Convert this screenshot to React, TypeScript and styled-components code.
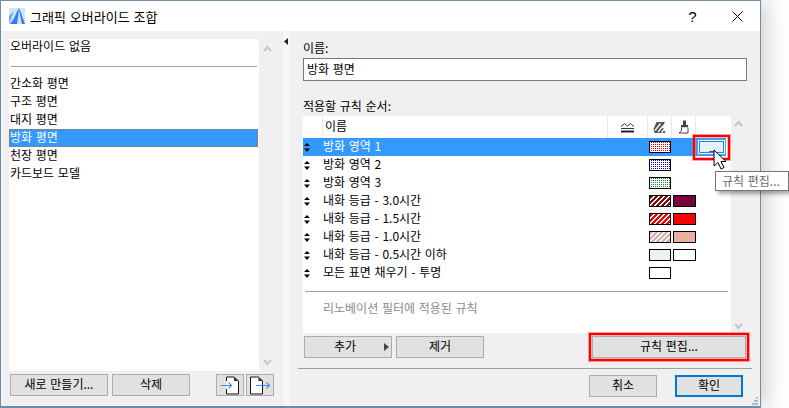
import React from 'react';
import styled, { createGlobalStyle } from 'styled-components';

const GlobalStyle = createGlobalStyle`
  html, body {
    margin: 0;
    padding: 0;
    background: #fff;
    overflow: hidden;
  }
  * {
    box-sizing: border-box;
  }
`;

const Screen = styled.div`
  position: relative;
  width: 789px;
  height: 408px;
  overflow: hidden;
  font-family: 'Noto Sans CJK KR', 'Noto Sans', sans-serif;
  font-size: 12px;
  word-spacing: 1px;
  color: #000;
`;

const Dialog = styled.div`
  position: relative;
  width: 761px;
  height: 408px;
  display: flex;
  flex-direction: column;
  background: #f0f0f0;
  border: 1px solid #6c8cab;
  border-bottom-width: 2px;
  box-shadow: 4px 0 22px rgba(0, 0, 0, 0.22);
`;

const TitleBar = styled.div`
  height: 30px;
  flex: none;
  display: flex;
  align-items: center;
  background: #fff;
  padding-left: 8px;
`;

const Title = styled.span`
  margin-left: 5px;
  font-size: 13px;
  flex: 1;
`;

const HelpMark = styled.span`
  width: 46px;
  padding-left: 3px;
  text-align: center;
  font-family: 'Liberation Sans', sans-serif;
  font-size: 15px;
`;

const CloseMark = styled.span`
  width: 46px;
  display: flex;
  justify-content: center;
`;

const Body = styled.div`
  flex: 1;
  min-height: 0;
  display: flex;
`;

const LeftPane = styled.div`
  width: 282px;
  flex: none;
  padding: 8px 0 0 8px;
`;

const ListArea = styled.div`
  display: flex;
  height: 332px;
`;

const List = styled.div`
  width: 250px;
  background: #fff;
`;

const NoOverride = styled.div`
  height: 16px;
  line-height: 14px;
  padding-left: 1px;
`;

const ListRule = styled.div`
  height: 1px;
  margin: 11px 2px 8px;
  background: #a0a0a0;
`;

const ListRow = styled.div<{ $selected?: boolean }>`
  height: 18px;
  line-height: 14px;
  padding-left: 0;
  margin-right: 1px;
  white-space: nowrap;
  border: 1px solid transparent;
  ${(p) =>
    p.$selected &&
    `
    background: #3399ff;
    color: #fff;
    border: 1px dotted #b5742d;
  `}
`;

const ScrollColumn = styled.div<{ $width: number; $padding: string }>`
  width: ${(p) => p.$width}px;
  flex: none;
  display: flex;
  flex-direction: column;
  justify-content: space-between;
  align-items: center;
  padding: ${(p) => p.$padding};
`;

const ButtonBar = styled.div`
  display: flex;
  margin-top: 3px;
  padding-left: 1px;
  gap: 4px;
`;

const Button = styled.button<{ $width: number; $primary?: boolean }>`
  position: relative;
  width: ${(p) => p.$width}px;
  height: 22px;
  padding: 0 0 3px;
  flex: none;
  display: flex;
  align-items: center;
  justify-content: center;
  font-family: inherit;
  font-size: 12px;
  word-spacing: 1px;
  color: #000;
  background: #e1e1e1;
  border: ${(p) => (p.$primary ? '2px solid #0078d7' : '1px solid #adadad')};
  border-radius: 0;
`;

const MenuButton = styled(Button)`
  padding-right: 6px;
`;

const IconButton = styled(Button)`
  padding: 0;
`;

const LeftButtonSpacer = styled.div`
  width: 18px;
`;

const IconButtons = styled.div`
  display: flex;
  gap: 2px;
`;

const Splitter = styled.div`
  width: 7px;
  flex: none;
  display: flex;
  align-items: flex-start;
  background: #f7f7f7;
  padding: 7px 0 0 1px;
`;

const RightPane = styled.div`
  flex: 1;
  min-width: 0;
  padding: 8px 13px 0;
  display: flex;
  flex-direction: column;
`;

const FieldLabel = styled.label<{ $gap?: number }>`
  display: block;
  height: 18px;
  line-height: 18px;
  margin-top: ${(p) => p.$gap ?? 0}px;
`;

const NameInput = styled.div`
  height: 23px;
  margin-top: 1px;
  padding-left: 3px;
  line-height: 20px;
  background: #fff;
  border: 1px solid #7a7a7a;
`;

const RuleArea = styled.div`
  margin-top: 1px;
  margin-bottom: 3px;
  height: 217px;
  display: flex;
`;

const RuleTable = styled.div`
  width: 428px;
  flex: none;
  background: #fff;
  display: flex;
  flex-direction: column;
`;

const gridColumns = '19px 285px 40px 24px 24px 31px';

const HeaderRow = styled.div`
  height: 22px;
  width: 423px;
  flex: none;
  display: grid;
  grid-template-columns: ${gridColumns};
`;

const HeaderCell = styled.div<{ $plain?: boolean }>`
  display: flex;
  align-items: center;
  justify-content: center;
  border-left: ${(p) => (p.$plain ? 'none' : '1px solid #e8e8e8')};
`;

const HeaderName = styled(HeaderCell)`
  justify-content: flex-start;
  padding-left: 2px;
  padding-bottom: 4px;
`;

const RuleRow = styled.div<{ $selected?: boolean }>`
  height: 18px;
  width: 423px;
  flex: none;
  display: grid;
  grid-template-columns: ${gridColumns};
  align-items: center;
  background: ${(p) => (p.$selected ? '#3399ff' : 'transparent')};
  color: ${(p) => (p.$selected ? '#fff' : '#000')};
`;

const SortCell = styled.div`
  display: flex;
  padding-left: 1px;
`;

const RuleName = styled.div`
  line-height: 14px;
  padding: 0 0 3px 1px;
  white-space: nowrap;
`;

const Swatch = styled.div<{ $fill: string; $wide?: boolean }>`
  width: ${(p) => (p.$wide ? 23 : 22)}px;
  height: 12px;
  margin-left: 2px;
  border: 1px solid #000;
  background: ${(p) => p.$fill};
`;

const RuleBreak = styled.div`
  height: 1px;
  margin: 9px 3px 0 2px;
  background: #a0a0a0;
`;

const RenovationNote = styled.div`
  margin: 7px 0 0 20px;
  line-height: 17px;
  color: #8c8c8c;
`;

const EditSlot = styled.div`
  position: relative;
  height: 16px;
  margin-left: 2px;
  width: 29px;
  background: #e5f1fb;
  border: 1px solid #4ea2e6;
  box-shadow: inset 0 0 0 1px #f2f8fd, inset 0 0 0 2px #2186da;

  &::after {
    content: '';
    position: absolute;
    left: 11px;
    bottom: 2px;
    width: 6px;
    height: 1px;
    background: #555;
  }
`;

const RedMark = styled.div<{ $inset: string }>`
  position: absolute;
  inset: ${(p) => p.$inset};
  border: 2px solid #ff0000;
  box-shadow: 0 0 0 1px rgba(255, 80, 80, 0.55), inset 0 0 0 1px rgba(255, 120, 120, 0.5);
  pointer-events: none;
`;

const RuleButtons = styled.div`
  display: flex;
  gap: 4px;
  padding: 0 1px;
`;

const EditButtonWrap = styled.div`
  position: relative;
  margin-left: auto;
`;

const MenuArrow = styled.span`
  position: absolute;
  right: 2px;
  top: 6px;
  width: 0;
  height: 0;
  border-left: 5px solid #444;
  border-top: 4px solid transparent;
  border-bottom: 4px solid transparent;
`;

const FooterRule = styled.div`
  height: 1px;
  margin: 10px -5px 0 -5px;
  background: #a0a0a0;
`;

const Footer = styled.div`
  display: flex;
  justify-content: flex-end;
  gap: 18px;
  margin-top: 6px;
  padding-right: 4px;
`;

const Grip = styled.svg`
  position: absolute;
  right: 2px;
  bottom: 1px;
`;

const Tooltip = styled.div`
  position: absolute;
  left: 715px;
  top: 171px;
  width: 74px;
  height: 20px;
  padding-left: 6px;
  line-height: 17px;
  white-space: nowrap;
  overflow: hidden;
  color: #6d6d6d;
  background: #fff;
  border: 1px solid #767676;
  box-shadow: 3px 3px 4px rgba(0, 0, 0, 0.35);
`;

const Pointer = styled.svg`
  position: absolute;
  left: 713px;
  top: 149px;
`;

const ScrollUp = () => (
  <svg width="9" height="7" viewBox="0 0 9 7">
    <path d="M1 6 L4.5 2 L8 6" fill="none" stroke="#c6c6c6" strokeWidth="2" />
  </svg>
);

const ScrollDown = () => (
  <svg width="9" height="7" viewBox="0 0 9 7">
    <path d="M1 1 L4.5 5 L8 1" fill="none" stroke="#c6c6c6" strokeWidth="2" />
  </svg>
);

const SortArrows = () => (
  <svg width="6" height="9" viewBox="0 0 6 9">
    <path d="M3 0 L6 3 L0 3 Z M0 5.5 L6 5.5 L3 9 Z" fill="#000" />
  </svg>
);

const AppLogo = () => (
  <svg width="16" height="16" viewBox="0 0 16 16">
    <rect x="0" y="0" width="16" height="16" fill="#d3e3f8" />
    <path d="M0 16 L5 3 L0 8 Z" fill="#6fa6ee" />
    <path d="M1 16 C5 12 7 5 10 0 C12 4 14 11 16 16 Z" fill="#2f7df0" />
    <path d="M8 16 C9 10 9.5 5 10 1 C11 6 12 12 13 16 Z" fill="#cfe2fb" />
  </svg>
);

const ZoneIcon = () => (
  <svg width="15" height="11" viewBox="0 0 15 11">
    <path d="M1 4.5 L4.5 1.5 L7.5 4 L10.5 1.5 L14 4.5" fill="none" stroke="#333" />
    <path d="M1 6.5 H14" stroke="#333" />
    <path d="M1 9.5 H14" stroke="#222" strokeWidth="2" />
  </svg>
);

const CutFillIcon = () => (
  <svg width="13" height="13" viewBox="0 0 13 13">
    <path d="M3.5 1 H12 L9.5 5.5 L12.5 12 H1.5 L0.5 8 Z" fill="#555" />
    <path d="M2 9.5 L7.5 2.5 M5 11 L10 5 M8.5 11.5 L11 8.5" stroke="#fff" strokeWidth="1.3" />
  </svg>
);

const BrushIcon = () => (
  <svg width="11" height="14" viewBox="0 0 11 14">
    <rect x="5" y="0.5" width="3" height="5" fill="#444" />
    <rect x="3" y="5" width="7" height="2.5" fill="#444" />
    <path d="M3.5 7.5 V10.5 L1 13 H10 V7.5" fill="#fff" stroke="#444" />
  </svg>
);

const ImportIcon = () => (
  <svg width="21" height="19" viewBox="0 0 21 19">
    <path d="M6.5 5 V1 H14 L18.5 5 V18 H6.5 V13" fill="#fff" stroke="#111" />
    <path d="M14 1 V5 H18.5 Z" fill="#333" />
    <path d="M0.5 9.5 H11.5 M8.5 6.5 L11.5 9.5 L8.5 12.5" fill="none" stroke="#3f8cff" strokeWidth="1.2" />
  </svg>
);

const ExportIcon = () => (
  <svg width="22" height="19" viewBox="0 0 22 19">
    <path d="M1.5 1 H9.5 L13.5 5 V18 H1.5 Z" fill="#fff" stroke="#111" />
    <path d="M9.5 1 V5 H13.5 Z" fill="#333" />
    <path d="M7 9.5 H20.5 M17.5 6.5 L20.5 9.5 L17.5 12.5" fill="none" stroke="#3f8cff" strokeWidth="1.2" />
  </svg>
);

// one hard 1px square in each 2px tile
const dots = (color: string) =>
  `conic-gradient(from 0deg at 1px 1px, ${color} 0 25%, #fff 25% 100%) 0 0 / 2px 2px`;

const hatch = (color: string) =>
  `repeating-linear-gradient(135deg, ${color} 0 2.4px, #fff 2.4px 3.6px)`;

const leftItems = ['간소화 평면', '구조 평면', '대지 평면', '방화 평면', '천장 평면', '카드보드 모델'];

const rules = [
  { name: '방화 영역 1', fill: dots('#e60000') },
  { name: '방화 영역 2', fill: dots('#0000e0') },
  { name: '방화 영역 3', fill: dots('#108a3c') },
  { name: '내화 등급 - 3.0시간', fill: hatch('#7d1010'), second: '#7a0040' },
  { name: '내화 등급 - 1.5시간', fill: hatch('#f00000'), second: '#ff0000' },
  { name: '내화 등급 - 1.0시간', fill: hatch('#d8b0b0'), second: '#eaaf9f' },
  { name: '내화 등급 - 0.5시간 이하', fill: '#f0f0f0', second: '#ffffff' },
  { name: '모든 표면 채우기 - 투명', fill: '#ffffff' },
];

export default function App() {
  return (
    <Screen>
      <GlobalStyle />
      <Dialog>
        <TitleBar>
          <AppLogo />
          <Title>그래픽 오버라이드 조합</Title>
          <HelpMark>?</HelpMark>
          <CloseMark>
            <svg width="11" height="11" viewBox="0 0 11 11">
              <path d="M0.5 0.5 L10.5 10.5 M10.5 0.5 L0.5 10.5" stroke="#000" strokeWidth="1" />
            </svg>
          </CloseMark>
        </TitleBar>
        <Body>
          <LeftPane>
            <ListArea>
              <List>
                <NoOverride>오버라이드 없음</NoOverride>
                <ListRule />
                {leftItems.map((item) => (
                  <ListRow key={item} $selected={item === '방화 평면'}>
                    {item}
                  </ListRow>
                ))}
              </List>
              <ScrollColumn $width={23} $padding="6px 7px 5px 0">
                <ScrollUp />
                <ScrollDown />
              </ScrollColumn>
            </ListArea>
            <ButtonBar>
              <Button $width={98}>새로 만들기...</Button>
              <Button $width={78}>삭제</Button>
              <LeftButtonSpacer />
              <IconButtons>
                <IconButton $width={28}>
                  <ImportIcon />
                </IconButton>
                <IconButton $width={28}>
                  <ExportIcon />
                </IconButton>
              </IconButtons>
            </ButtonBar>
          </LeftPane>
          <Splitter>
            <svg width="4" height="7" viewBox="0 0 4 7">
              <path d="M4 0 V7 L0 3.5 Z" fill="#222" />
            </svg>
          </Splitter>
          <RightPane>
            <FieldLabel>이름:</FieldLabel>
            <NameInput>방화 평면</NameInput>
            <FieldLabel $gap={16}>적용할 규칙 순서:</FieldLabel>
            <RuleArea>
              <RuleTable>
                <HeaderRow>
                  <HeaderCell $plain />
                  <HeaderName>이름</HeaderName>
                  <HeaderCell>
                    <ZoneIcon />
                  </HeaderCell>
                  <HeaderCell>
                    <CutFillIcon />
                  </HeaderCell>
                  <HeaderCell>
                    <BrushIcon />
                  </HeaderCell>
                  <HeaderCell />
                </HeaderRow>
                {rules.map((rule, i) => (
                  <RuleRow key={rule.name} $selected={i === 0}>
                    <SortCell>
                      <SortArrows />
                    </SortCell>
                    <RuleName>{rule.name}</RuleName>
                    <span />
                    <Swatch $fill={rule.fill} />
                    {rule.second ? <Swatch $fill={rule.second} $wide /> : <span />}
                    {i === 0 ? (
                      <EditSlot>
                        <RedMark $inset="-5px -5px -6px -5px" />
                      </EditSlot>
                    ) : (
                      <span />
                    )}
                  </RuleRow>
                ))}
                <RuleBreak />
                <RenovationNote>리노베이션 필터에 적용된 규칙</RenovationNote>
              </RuleTable>
              <ScrollColumn $width={15} $padding="4px 0 3px">
                <ScrollUp />
                <ScrollDown />
              </ScrollColumn>
            </RuleArea>
            <RuleButtons>
              <MenuButton $width={88}>
                추가
                <MenuArrow />
              </MenuButton>
              <Button $width={88}>제거</Button>
              <EditButtonWrap>
                <Button $width={154}>규칙 편집...</Button>
                <RedMark $inset="-3px -3px -3px -3px" />
              </EditButtonWrap>
            </RuleButtons>
            <FooterRule />
            <Footer>
              <Button $width={68}>취소</Button>
              <Button $width={68} $primary>
                확인
              </Button>
            </Footer>
          </RightPane>
        </Body>
        <Grip width="6" height="8" viewBox="0 0 6 8">
          <path d="M4 0 h2 v2 h-2 Z M2 3 h2 v2 h-2 Z M4 3 h2 v2 h-2 Z M0 6 h2 v2 h-2 Z M2 6 h2 v2 h-2 Z M4 6 h2 v2 h-2 Z" fill="#b8b8b8" />
        </Grip>
      </Dialog>
      <Pointer width="14" height="21" viewBox="0 0 14 21">
        <path d="M1 1 V17 L5 13.5 L8 20 L11 18.5 L8 12.5 L13 12.5 Z" fill="#fff" stroke="#000" />
      </Pointer>
      <Tooltip>규칙 편집...</Tooltip>
    </Screen>
  );
}
